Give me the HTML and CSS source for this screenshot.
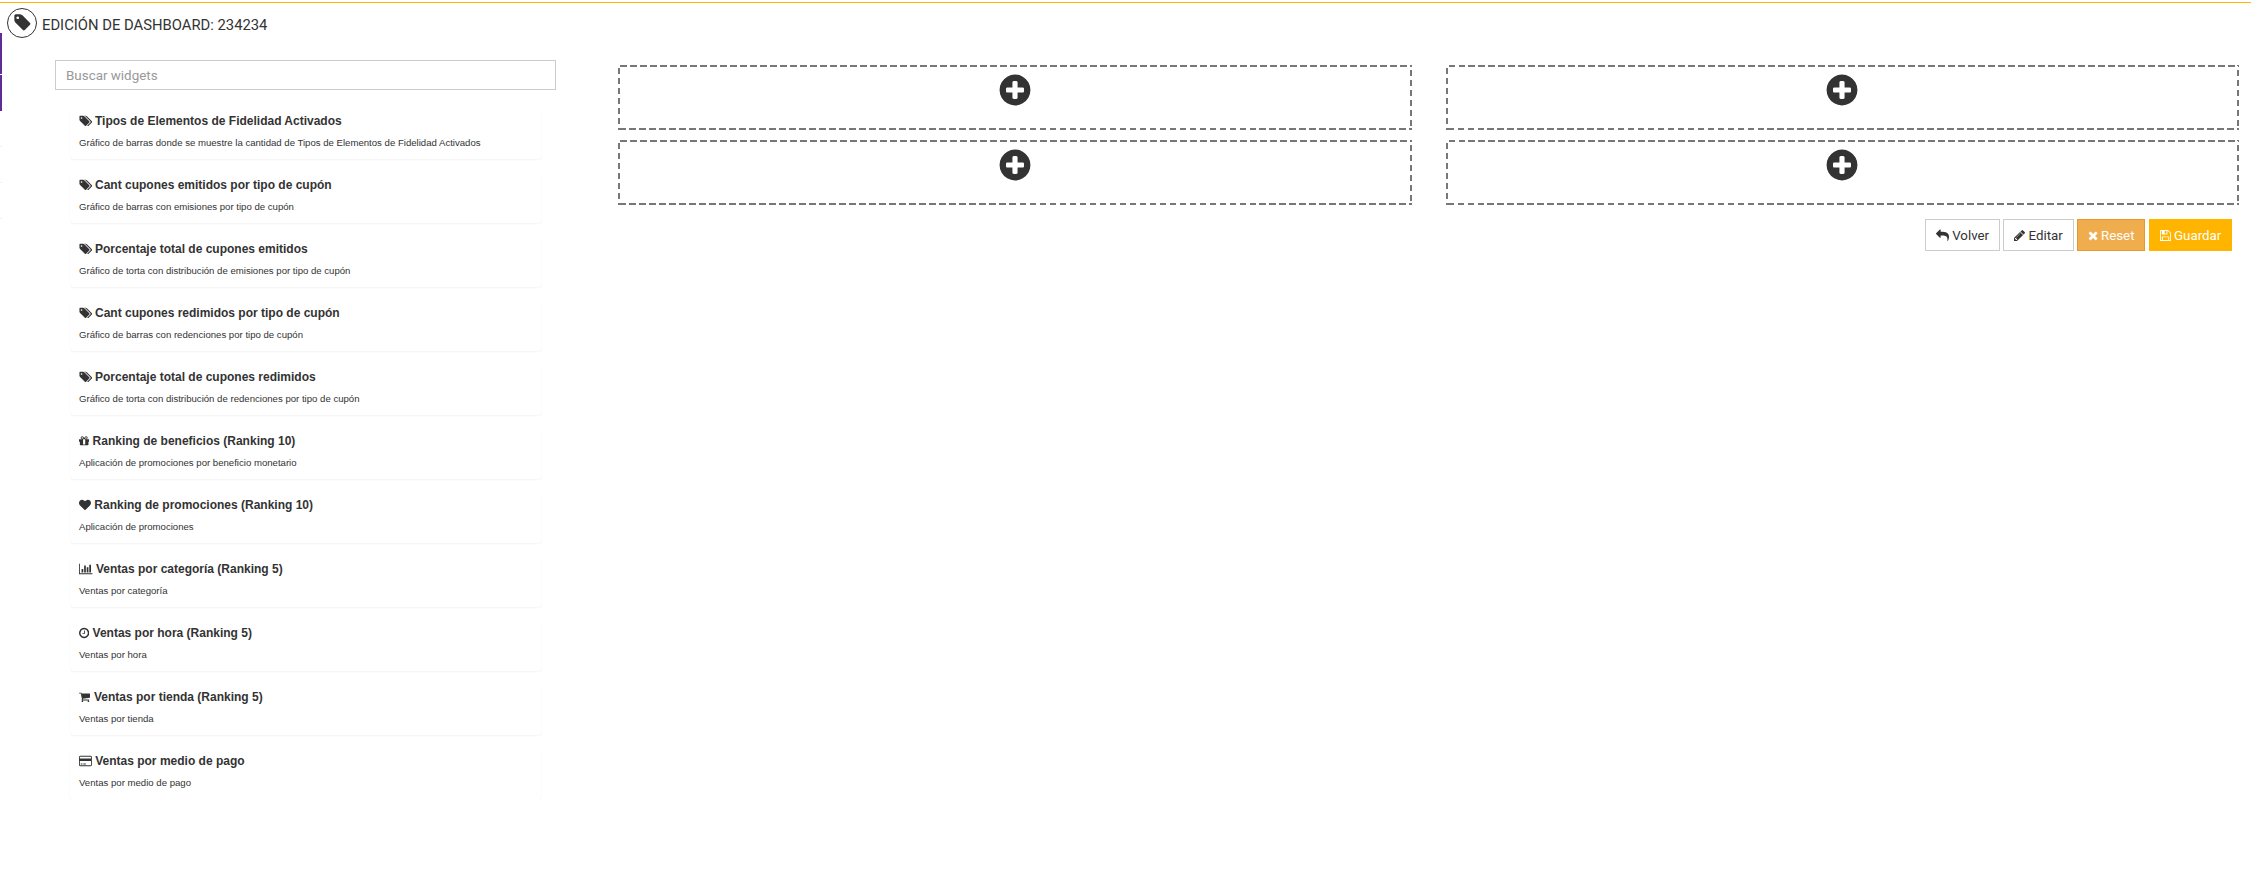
FILE: index.html
```html
<!DOCTYPE html>
<html lang="es">
<head>
<meta charset="utf-8">
<title>Edición de dashboard</title>
<link rel="stylesheet" href="styles.css">
</head>
<body>
<svg class="defs" aria-hidden="true">
  <symbol id="i-tag" viewBox="0 0 1792 1792"><path d="M576 448q0-53-37.5-90.5t-90.5-37.5-90.5 37.5-37.5 90.5 37.5 90.5 90.5 37.5 90.5-37.5 37.5-90.5zm1067 576q0 53-37 90l-491 492q-39 37-91 37-53 0-90-37l-715-716q-38-37-64.5-101t-26.5-117v-416q0-52 38-90t90-38h416q53 0 117 26.5t102 64.5l715 714q37 39 37 91z"/></symbol>
  <symbol id="i-tags" viewBox="0 0 1984 1792"><path d="M512 448q0-53-37.5-90.5t-90.5-37.5-90.5 37.5-37.5 90.5 37.5 90.5 90.5 37.5 90.5-37.5 37.5-90.5zm1067 576q0 53-37 90l-491 492q-39 37-91 37-53 0-90-37l-715-716q-38-37-64.5-101t-26.5-117v-416q0-52 38-90t90-38h416q53 0 117 26.5t102 64.5l715 714q37 39 37 91zm384 0q0 53-37 90l-491 492q-39 37-91 37-36 0-59-14t-53-45l470-470q37-37 37-90 0-52-37-91l-715-714q-38-38-102-64.5t-117-26.5h224q53 0 117 26.5t102 64.5l715 714q37 39 37 91z"/></symbol>
  <symbol id="i-gift" viewBox="128 0 1536 1792"><path d="M1056 1356v-716h-320v716q0 25 18 38.5t46 13.5h192q28 0 46-13.5t18-38.5zm-456-844h195l-126-161q-26-31-69-31-40 0-68 28t-28 68 28 68 68 28zm688-96q0-40-28-68t-68-28q-43 0-69 31l-125 161h194q40 0 68-28t28-68zm376 256v320q0 14-9 23t-23 9h-96v416q0 40-28 68t-68 28h-1088q-40 0-68-28t-28-68v-416h-96q-14 0-23-9t-9-23v-320q0-14 9-23t23-9h440q-93 0-158.5-65.5t-65.5-158.5 65.5-158.5 158.5-65.5q107 0 168 77l128 165 128-165q61-77 168-77 93 0 158.5 65.5t65.5 158.5-65.5 158.5-158.5 65.5h440q14 0 23 9t9 23z"/></symbol>
  <symbol id="i-heart" viewBox="0 0 1792 1792"><path d="M896 1664q-26 0-44-18l-624-602q-10-8-27.5-26t-55.5-65.5-68-97.5-53.5-121-23.5-138q0-220 127-344t351-124q62 0 126.5 21.5t120 58 95.5 68.5 76 68q36-36 76-68t95.5-68.5 120-58 126.5-21.5q224 0 351 124t127 344q0 221-229 450l-623 600q-18 18-44 18z"/></symbol>
  <symbol id="i-chart" viewBox="0 0 2048 1792"><path d="M640 896v512h-256v-512h256zm384-512v1024h-256v-1024h256zm1024 1152v128h-2048v-1536h128v1408h1920zm-640-896v768h-256v-768h256zm384-384v1152h-256v-1152h256z"/></symbol>
  <symbol id="i-clock" viewBox="128 0 1536 1792"><path d="M1024 544v448q0 14-9 23t-23 9h-320q-14 0-23-9t-9-23v-64q0-14 9-23t23-9h224v-352q0-14 9-23t23-9h64q14 0 23 9t9 23zm416 352q0-148-73-273t-198-198-273-73-273 73-198 198-73 273 73 273 198 198 273 73 273-73 198-198 73-273zm224 0q0 209-103 385.5t-279.5 279.5-385.5 103-385.5-103-279.5-279.5-103-385.5 103-385.5 279.5-279.5 385.5-103 385.5 103 279.5 279.5 103 385.5z"/></symbol>
  <symbol id="i-cart" viewBox="64 0 1664 1792"><path d="M704 1536q0 52-38 90t-90 38-90-38-38-90 38-90 90-38 90 38 38 90zm896 0q0 52-38 90t-90 38-90-38-38-90 38-90 90-38 90 38 38 90zm128-1088v512q0 24-16.5 42.5t-40.5 21.5l-1044 122q13 60 13 70 0 16-24 64h920q26 0 45 19t19 45-19 45-45 19h-1024q-26 0-45-19t-19-45q0-11 8-31.5t16-36 21.5-40 15.5-29.5l-177-823h-204q-26 0-45-19t-19-45 19-45 45-19h256q16 0 28.5 6.5t19.5 15.5 13 24.5 8 26 5.5 29.5 4.5 26h1201q26 0 45 19t19 45z"/></symbol>
  <symbol id="i-card" viewBox="0 0 1920 1792"><path d="M1760 128q66 0 113 47t47 113v1216q0 66-47 113t-113 47h-1600q-66 0-113-47t-47-113v-1216q0-66 47-113t113-47h1600zm-1600 128q-13 0-22.5 9.5t-9.5 22.5v224h1664v-224q0-13-9.5-22.5t-22.5-9.5h-1600zm1600 1280q13 0 22.5-9.5t9.5-22.5v-608h-1664v608q0 13 9.5 22.5t22.5 9.5h1600zm-1504-128v-128h256v128h-256zm384 0v-128h384v128h-384z"/></symbol>
  <symbol id="i-reply" viewBox="0 0 1792 1792"><path d="M1792 1120q0 166-127 451-3 7-10.5 24t-13.5 30-13 22q-12 17-28 17-15 0-23.5-10t-8.5-25q0-9 2.5-26.5t2.5-23.5q5-68 5-123 0-101-17.5-181t-48.5-138.5-80-101-105.5-69.5-133-42.5-154-21.5-175.5-6h-224v256q0 26-19 45t-45 19-45-19l-512-512q-19-19-19-45t19-45l512-512q19-19 45-19t45 19 19 45v256h224q713 0 875 403 53 134 53 333z"/></symbol>
  <symbol id="i-pencil" viewBox="128 0 1536 1792"><path d="M491 1536l91-91-235-235-91 91v107h128v128h107zm523-928q0-22-22-22-10 0-17 7l-542 542q-7 7-7 17 0 22 22 22 10 0 17-7l542-542q7-7 7-17zm-54-192l416 416-832 832h-416v-416zm683 96q0 53-37 90l-166 166-416-416 166-165q36-38 90-38 53 0 91 38l235 234q37 39 37 91z"/></symbol>
  <symbol id="i-remove" viewBox="192 0 1408 1792"><path d="M1490 1322q0 40-28 68l-136 136q-28 28-68 28t-68-28l-294-294-294 294q-28 28-68 28t-68-28l-136-136q-28-28-28-68t28-68l294-294-294-294q-28-28-28-68t28-68l136-136q28-28 68-28t68 28l294 294 294-294q28-28 68-28t68 28l136 136q28 28 28 68t-28 68l-294 294 294 294q28 28 28 68z"/></symbol>
  <symbol id="i-save" viewBox="128 0 1536 1792"><path d="M512 1536h768v-384h-768v384zm896 0h128v-896q0-14-10-38.5t-20-34.5l-281-281q-10-10-34-20t-39-10v416q0 40-28 68t-68 28h-576q-40 0-68-28t-28-68v-416h-128v1280h128v-416q0-40 28-68t68-28h832q40 0 68 28t28 68v416zm-384-928v-320q0-13-9.5-22.5t-22.5-9.5h-192q-13 0-22.5 9.5t-9.5 22.5v320q0 13 9.5 22.5t22.5 9.5h192q13 0 22.5-9.5t9.5-22.5zm640 32v928q0 40-28 68t-68 28h-1344q-40 0-68-28t-28-68v-1344q0-40 28-68t68-28h928q40 0 88 20t76 48l280 280q28 28 48 76t20 88z"/></symbol>
  <symbol id="i-plus" viewBox="0 0 1792 1792"><path d="M1344 960v-128q0-26-19-45t-45-19h-256v-256q0-26-19-45t-45-19h-128q-26 0-45 19t-19 45v256h-256q-26 0-45 19t-19 45v128q0 26 19 45t45 19h256v256q0 26 19 45t45 19h128q26 0 45-19t19-45v-256h256q26 0 45-19t19-45zm320-64q0 209-103 385.5t-279.5 279.5-385.5 103-385.5-103-279.5-279.5-103-385.5 103-385.5 279.5-279.5 385.5-103 385.5 103 279.5 279.5 103 385.5z"/></symbol>
</svg>

<div class="rail" aria-hidden="true">
  <span class="rail-item"></span>
  <span class="rail-item rail-item-short"></span>
  <span class="rail-tick rail-tick-first"></span>
  <span class="rail-tick"></span>
  <span class="rail-tick"></span>
</div>

<div class="topline"></div>

<header class="page-head">
  <span class="head-badge"><svg class="head-icon"><use href="#i-tag"/></svg></span>
  <h1 class="page-title">EDICIÓN DE DASHBOARD: 234234</h1>
</header>

<main class="layout">
  <section class="widgets">
    <input class="search" type="text" placeholder="Buscar widgets">
    <ul class="widget-list">
      <li class="widget">
        <h2 class="widget-title"><svg class="ico ico-tags"><use href="#i-tags"/></svg>Tipos de Elementos de Fidelidad Activados</h2>
        <p class="widget-desc">Gráfico de barras donde se muestre la cantidad de Tipos de Elementos de Fidelidad Activados</p>
      </li>
      <li class="widget">
        <h2 class="widget-title"><svg class="ico ico-tags"><use href="#i-tags"/></svg>Cant cupones emitidos por tipo de cupón</h2>
        <p class="widget-desc">Gráfico de barras con emisiones por tipo de cupón</p>
      </li>
      <li class="widget">
        <h2 class="widget-title"><svg class="ico ico-tags"><use href="#i-tags"/></svg>Porcentaje total de cupones emitidos</h2>
        <p class="widget-desc">Gráfico de torta con distribución de emisiones por tipo de cupón</p>
      </li>
      <li class="widget">
        <h2 class="widget-title"><svg class="ico ico-tags"><use href="#i-tags"/></svg>Cant cupones redimidos por tipo de cupón</h2>
        <p class="widget-desc">Gráfico de barras con redenciones por tipo de cupón</p>
      </li>
      <li class="widget">
        <h2 class="widget-title"><svg class="ico ico-tags"><use href="#i-tags"/></svg>Porcentaje total de cupones redimidos</h2>
        <p class="widget-desc">Gráfico de torta con distribución de redenciones por tipo de cupón</p>
      </li>
      <li class="widget">
        <h2 class="widget-title"><svg class="ico ico-gift"><use href="#i-gift"/></svg>Ranking de beneficios (Ranking 10)</h2>
        <p class="widget-desc">Aplicación de promociones por beneficio monetario</p>
      </li>
      <li class="widget">
        <h2 class="widget-title"><svg class="ico ico-heart"><use href="#i-heart"/></svg>Ranking de promociones (Ranking 10)</h2>
        <p class="widget-desc">Aplicación de promociones</p>
      </li>
      <li class="widget">
        <h2 class="widget-title"><svg class="ico ico-chart"><use href="#i-chart"/></svg>Ventas por categoría (Ranking 5)</h2>
        <p class="widget-desc">Ventas por categoría</p>
      </li>
      <li class="widget">
        <h2 class="widget-title"><svg class="ico ico-clock"><use href="#i-clock"/></svg>Ventas por hora (Ranking 5)</h2>
        <p class="widget-desc">Ventas por hora</p>
      </li>
      <li class="widget">
        <h2 class="widget-title"><svg class="ico ico-cart"><use href="#i-cart"/></svg>Ventas por tienda (Ranking 5)</h2>
        <p class="widget-desc">Ventas por tienda</p>
      </li>
      <li class="widget">
        <h2 class="widget-title"><svg class="ico ico-card"><use href="#i-card"/></svg>Ventas por medio de pago</h2>
        <p class="widget-desc">Ventas por medio de pago</p>
      </li>
    </ul>
  </section>

  <section class="canvas">
    <div class="slots">
      <div class="slot"><svg class="slot-plus"><use href="#i-plus"/></svg></div>
      <div class="slot"><svg class="slot-plus"><use href="#i-plus"/></svg></div>
      <div class="slot"><svg class="slot-plus"><use href="#i-plus"/></svg></div>
      <div class="slot"><svg class="slot-plus"><use href="#i-plus"/></svg></div>
    </div>
    <div class="actions">
      <button class="btn btn-default btn-volver" type="button"><svg class="btn-ico btn-ico-reply"><use href="#i-reply"/></svg>Volver</button>
      <button class="btn btn-default btn-editar" type="button"><svg class="btn-ico btn-ico-pencil"><use href="#i-pencil"/></svg>Editar</button>
      <button class="btn btn-reset" type="button"><svg class="btn-ico btn-ico-remove"><use href="#i-remove"/></svg>Reset</button>
      <button class="btn btn-save" type="button"><svg class="btn-ico btn-ico-save"><use href="#i-save"/></svg>Guardar</button>
    </div>
  </section>
</main>
</body>
</html>
```

FILE: styles.css
```css
* { box-sizing: border-box; }

html, body {
  margin: 0;
  padding: 0;
  background: #fff;
}

body {
  padding-top: 2px;
  font-family: Roboto, "Liberation Sans", sans-serif;
  color: #333;
}

.defs {
  position: absolute;
  width: 0;
  height: 0;
  overflow: hidden;
}

.rail {
  position: absolute;
  top: 33px;
  left: 0;
  width: 2px;
  display: flex;
  flex-direction: column;
}

.rail-item {
  display: block;
  height: 41px;
  margin-bottom: 1px;
  background: #5e2b97;
}

.rail-item-short { height: 36px; margin-bottom: 0; }

.rail-tick {
  display: block;
  height: 1px;
  margin-bottom: 35px;
  background: #f1f1f1;
}

.rail-tick-first { margin-top: 35px; }

.topline {
  height: 1px;
  background: #ffb400;
}

.page-head {
  display: flex;
  align-items: center;
  gap: 4px;
  padding: 5px 0 0 7px;
}

.head-badge {
  display: flex;
  align-items: center;
  justify-content: center;
  width: 30px;
  height: 30px;
  border: 1px solid #333;
  border-radius: 50%;
}

.head-icon {
  width: 19px;
  height: 19px;
  margin-bottom: 2px;
  fill: #333;
}

.page-title {
  margin: 4px 0 0 1px;
  font-size: 14.8px;
  font-weight: 400;
  line-height: 20px;
  color: #333;
}

.layout {
  display: flex;
  align-items: flex-start;
  padding: 0 12px 0 55px;
}

.widgets {
  flex: 0 0 501px;
  margin-top: 22px;
}

.search {
  display: block;
  width: 501px;
  height: 30px;
  padding: 0 10px;
  border: 1px solid #ccc;
  border-radius: 0;
  outline: 0;
  font-family: Roboto, "Liberation Sans", sans-serif;
  font-size: 13.4px;
  color: #333;
}

.search::placeholder { color: #999; opacity: 1; }

.widget-list {
  list-style: none;
  margin: 15px 0 0 15px;
  padding: 0;
  width: 471px;
  display: flex;
  flex-direction: column;
  gap: 10px;
}

.widget {
  height: 54px;
  padding: 8px 9px 0;
  border-radius: 4px;
  background: #fff;
  box-shadow: 0 1px 2px rgba(0, 0, 0, .05);
}

.widget-title {
  margin: 0;
  display: flex;
  align-items: center;
  height: 16px;
  font-family: "Liberation Sans", Arial, sans-serif;
  font-size: 12px;
  font-weight: 700;
  line-height: 16px;
  color: #333;
  white-space: nowrap;
}

.widget-desc {
  margin: 7px 0 0;
  font-family: "Liberation Sans", Arial, sans-serif;
  font-size: 9.6px;
  line-height: 14px;
  color: #333;
  white-space: nowrap;
}

.ico {
  flex: none;
  height: 12px;
  margin-right: 3.3px;
  fill: #333;
}

.ico-tags { width: 13.3px; margin-right: 2.7px; }
.ico-gift { width: 10.3px; }
.ico-heart { width: 12px; }
.ico-chart { width: 13.7px; }
.ico-clock { width: 10.3px; }
.ico-cart { width: 11.1px; margin-right: 3.9px; }
.ico-card { width: 12.9px; }

.canvas {
  flex: 1 1 auto;
  min-width: 0;
  margin-left: 62px;
}

.slots {
  margin-top: 27px;
  display: grid;
  grid-template-columns: 1fr 1fr;
  column-gap: 34px;
  row-gap: 10px;
}

.slot {
  height: 65px;
  display: flex;
  justify-content: center;
  padding-top: 7px;
  background-image:
    repeating-linear-gradient(90deg, transparent 0 2.5px, #777 2.5px 9px, transparent 9px 10px),
    repeating-linear-gradient(90deg, transparent 0 1.5px, #777 1.5px 8px, transparent 8px 10px),
    repeating-linear-gradient(180deg, transparent 0 3px, #777 3px 9.5px, transparent 9.5px 10px),
    repeating-linear-gradient(180deg, #777 0 1.5px, transparent 1.5px 5px, #777 5px 10px);
  background-size: 100% 2px, 100% 2px, 2px 100%, 2px 100%;
  background-position: left top, left bottom, left top, right top;
  background-repeat: no-repeat;
}

.slot-plus {
  width: 36px;
  height: 36px;
  fill: #333;
}

.actions {
  display: flex;
  justify-content: flex-end;
  gap: 3px;
  margin-top: 14px;
  padding-right: 7px;
}

.btn {
  display: flex;
  align-items: center;
  justify-content: center;
  height: 32px;
  padding: 0;
  border: 1px solid #ccc;
  border-radius: 0;
  background: #fff;
  font-family: Roboto, "Liberation Sans", sans-serif;
  font-size: 13.3px;
  color: #333;
}

.btn-ico {
  height: 13px;
  margin-right: 3.3px;
  fill: currentColor;
}

.btn-ico-reply { width: 13px; }
.btn-ico-pencil { width: 11.1px; }
.btn-ico-remove { width: 10.2px; }
.btn-ico-save { width: 11.1px; }

.btn-volver { width: 75px; }
.btn-editar { width: 71px; }

.btn-reset {
  width: 68px;
  border-color: #e4982e;
  background: #f0ad4e;
  color: #fff;
}

.btn-save {
  width: 83px;
  margin-left: 1px;
  border-color: #ffb400;
  background: #ffb400;
  color: #fff;
}
```
